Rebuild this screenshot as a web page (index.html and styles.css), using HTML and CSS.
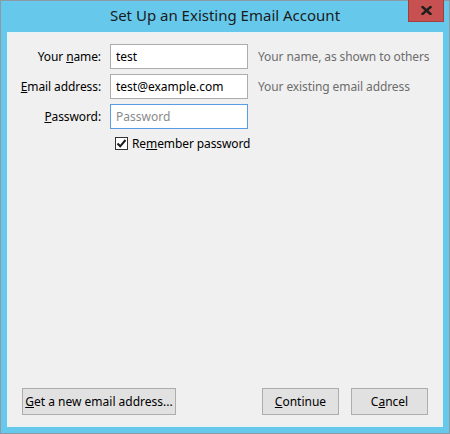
FILE: index.html
```html
<!DOCTYPE html>
<html lang="en">
<head>
    <meta charset="UTF-8">
    <title>Set Up an Existing Email Account</title>
    <link rel="stylesheet" href="styles.css">
</head>
<body>
    <div class="window">
        <div class="titlebar">
            <span class="title">Set Up an Existing Email Account</span>
            <button class="close-btn" title="Close">
                <svg width="11" height="9" viewBox="0 0 11 9">
                    <path d="M1.5 1 L9.5 8 M9.5 1 L1.5 8" stroke="#1e1e1e" stroke-width="2.4" stroke-linecap="square"/>
                </svg>
            </button>
        </div>
        <div class="client">
            <div class="form">
                <label class="field-label" for="name">Your <u>n</u>ame:</label>
                <input class="field" type="text" id="name" value="test">
                <span class="hint">Your name, as shown to others</span>

                <label class="field-label" for="email"><u>E</u>mail address:</label>
                <input class="field" type="text" id="email" value="test@example.com">
                <span class="hint">Your existing email address</span>

                <label class="field-label" for="password"><u>P</u>assword:</label>
                <input class="field focused" type="password" id="password" placeholder="Password">
                <span class="hint"></span>

                <label class="remember" for="remember">
                    <input type="checkbox" id="remember" checked>
                    <span class="check-box">
                        <svg width="11" height="11" viewBox="0 0 11 11">
                            <path d="M1.5 5.5 L4.2 8.3 L9.5 2" fill="none" stroke="#1a1a1a" stroke-width="2"/>
                        </svg>
                    </span>
                    <span>Re<u>m</u>ember password</span>
                </label>
            </div>
            <div class="buttons">
                <button class="btn btn-wide"><u>G</u>et a new email address...</button>
                <div class="spacer"></div>
                <button class="btn"><u>C</u>ontinue</button>
                <button class="btn">C<u>a</u>ncel</button>
            </div>
        </div>
    </div>
</body>
</html>
```

FILE: styles.css
```css
body {
    margin: 0;
    padding: 0;
    font-family: 'Noto Sans', 'Open Sans', sans-serif;
    font-size: 12px;
    color: #000;
}

.window {
    width: 448px;
    height: 432px;
    border: 1px solid #8c9aa3;
    background-color: #66c9ec;
    display: flex;
    flex-direction: column;
}

.titlebar {
    position: relative;
    height: 31px;
    display: flex;
    justify-content: center;
    align-items: center;
}

.title {
    font-size: 15px;
    color: #1b1b1b;
    margin-top: -3px;
}

.close-btn {
    position: absolute;
    top: -1px;
    right: 5px;
    width: 36px;
    height: 22px;
    border: 1px solid #a04040;
    border-top: none;
    background-color: #c75050;
    padding: 0;
    display: flex;
    justify-content: center;
    align-items: center;
}

.client {
    flex: 1;
    margin: 0 6px 6px 6px;
    border: 1px solid #e6f3f8;
    background-color: #f0f0f0;
    display: flex;
    flex-direction: column;
    justify-content: space-between;
}

.form {
    display: grid;
    grid-template-columns: 93px 138px 1fr;
    column-gap: 9px;
    row-gap: 5px;
    padding-top: 11px;
    align-items: center;
    letter-spacing: -0.1px;
}

.field-label {
    text-align: right;
    color: #000;
}

.hint {
    color: #6d6d6d;
    padding-left: 1px;
}

.field {
    height: 25px;
    box-sizing: border-box;
    border: 1px solid #acacac;
    background: #fff;
    font-family: inherit;
    font-size: 12px;
    padding: 0 5px;
    margin: 0;
    color: #000;
}

.field.focused {
    border-color: #569de5;
}

.field::placeholder {
    color: #8a8a8a;
}

.remember {
    grid-column: 2 / 4;
    display: flex;
    align-items: center;
    gap: 4px;
    padding-left: 5px;
    margin-top: 1px;
    white-space: nowrap;
}

.remember input[type="checkbox"] {
    display: none;
}

.check-box {
    width: 11px;
    height: 11px;
    border: 1px solid #333;
    background: #fff;
    display: flex;
}

.buttons {
    display: flex;
    gap: 12px;
    padding: 0 14px 11px 14px;
}

.spacer {
    flex: 1;
}

.btn {
    height: 27px;
    width: 77px;
    box-sizing: border-box;
    border: 1px solid #adadad;
    background-color: #e1e1e1;
    font-family: inherit;
    font-size: 12px;
    color: #000;
    padding: 0;
}

.btn-wide {
    width: 154px;
}
```
